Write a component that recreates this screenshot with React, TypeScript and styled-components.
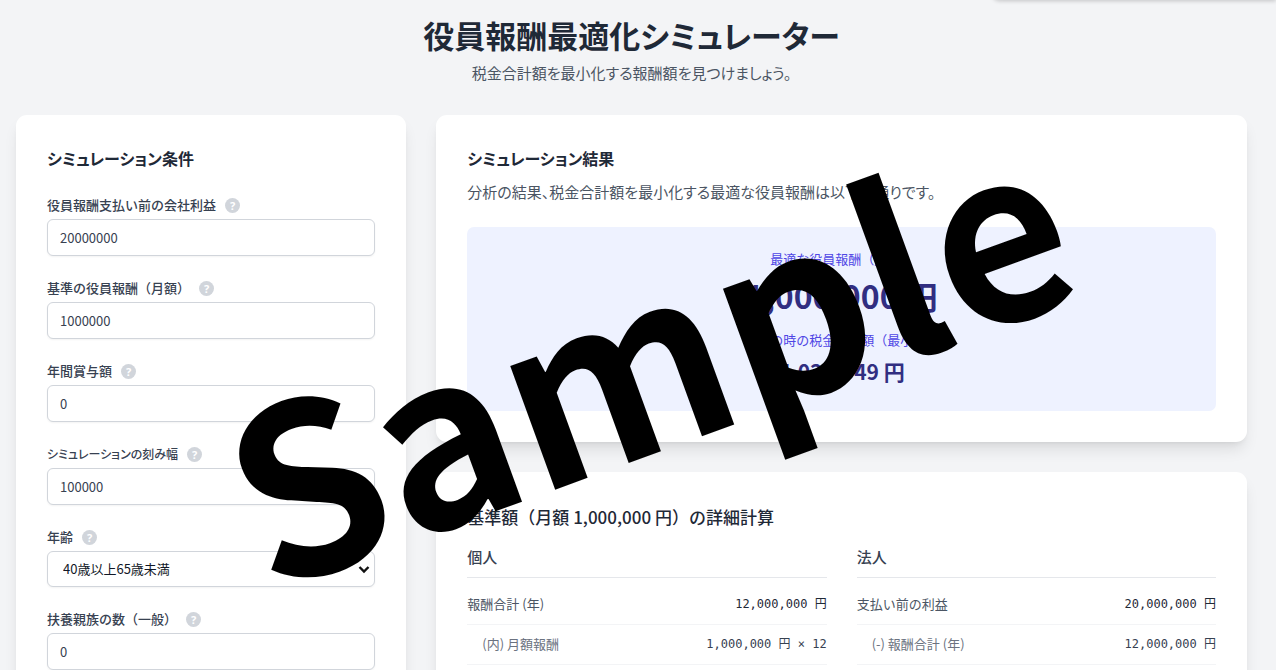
import React, { useId } from 'react';
import styled, { createGlobalStyle } from 'styled-components';

const GlobalStyle = createGlobalStyle`
  *, *::before, *::after { box-sizing: border-box; }
  body {
    margin: 0;
    background: #ffffff;
    color: #1f2937;
    font-family: "Noto Sans CJK JP", "Noto Sans", sans-serif;
  }
  h1, h2, h3, p, dl, dd, dt { margin: 0; }
`;

const Page = styled.div`
  position: relative;
  height: 100vh;
  margin-right: 4px;
  padding: 14px 29px 0 16px;
  overflow: hidden;
  background: #f3f4f6;
`;

const Notice = styled.div`
  position: absolute;
  right: 0;
  bottom: 100%;
  width: 284px;
  height: 60px;
  border-radius: 0 0 0 8px;
  background: #ffffff;
  box-shadow: 0 1px 4px rgba(0, 0, 0, 0.2);
`;

const Header = styled.header`
  margin-bottom: 31px;
  font-feature-settings: "palt";
  text-align: center;
`;

const Title = styled.h1`
  color: #1f2937;
  font-size: 31px;
  font-weight: 700;
  line-height: 42px;
`;

const Lead = styled.p`
  margin-top: 5px;
  color: #4b5563;
  font-size: 15px;
  line-height: 23px;
`;

const Layout = styled.main`
  display: grid;
  grid-template-columns: repeat(3, minmax(0, 1fr));
  align-items: start;
  gap: 30px;
`;

const Results = styled.div`
  display: grid;
  grid-column: span 2;
  gap: 30px;
`;

const Card = styled.section`
  padding: 31px;
  border-radius: 11px;
  background: #ffffff;
  box-shadow: 0 10px 15px -3px rgba(0, 0, 0, 0.1), 0 4px 6px -4px rgba(0, 0, 0, 0.1);
`;

const CardTitle = styled.h2`
  color: #1f2937;
  font-size: 16px;
  font-feature-settings: "palt";
  font-weight: 700;
  line-height: 24px;
`;

const Form = styled.form`
  display: grid;
  gap: 22px;
  margin-top: 25px;
`;

const FieldHead = styled.div`
  display: flex;
  align-items: center;
  gap: 9px;
  height: 20px;
  margin-bottom: 4px;
`;

const Label = styled.label<{ $compact?: boolean }>`
  color: #374151;
  font-size: ${({ $compact }) => ($compact ? 12 : 13)}px;
  font-feature-settings: ${({ $compact }) => ($compact ? '"palt"' : 'normal')};
  font-weight: 500;
  line-height: 20px;
`;

const Help = styled.button`
  width: 15px;
  height: 15px;
  padding: 0;
  border: 0;
  border-radius: 50%;
  background: #d1d5db;
  color: #ffffff;
  font: 700 11px/15px "Noto Sans", sans-serif;
  text-align: center;
`;

const TextInput = styled.input`
  display: block;
  width: 100%;
  height: 37px;
  padding: 0 12px;
  border: 1px solid #d1d5db;
  border-radius: 6px;
  background: #ffffff;
  box-shadow: 0 1px 2px rgba(0, 0, 0, 0.05);
  color: #374151;
  font: 400 13px/20px "Noto Sans CJK JP", sans-serif;
`;

const SelectWrap = styled.div`
  position: relative;
`;

const SelectInput = styled.select`
  display: block;
  width: 100%;
  height: 36px;
  padding: 0 15px;
  border: 1px solid #d1d5db;
  border-radius: 6px;
  appearance: none;
  background: #ffffff;
  box-shadow: 0 1px 2px rgba(0, 0, 0, 0.05);
  color: #111827;
  font: 400 13px/20px "Noto Sans CJK JP", sans-serif;
`;

const Chevron = styled.svg`
  position: absolute;
  top: 14px;
  right: 5px;
  width: 12px;
  height: 9px;
  pointer-events: none;
`;

const Description = styled.p`
  margin-top: 10px;
  color: #4b5563;
  font-size: 15px;
  font-feature-settings: "palt";
  line-height: 23px;
`;

const Highlight = styled.div`
  margin-top: 24px;
  padding: 22px;
  border-radius: 7px;
  background: #eef2ff;
  text-align: center;
`;

const HighlightLabel = styled.p`
  color: #4f46e5;
  font-size: 13px;
  line-height: 20px;
`;

const HighlightValue = styled.p<{ $large?: boolean }>`
  margin: ${({ $large }) => ($large ? '6px 0 15px' : '4px 0 1px')};
  color: #312e81;
  font-size: ${({ $large }) => ($large ? 32 : 21)}px;
  font-weight: 700;
  line-height: ${({ $large }) => ($large ? 40 : 34)}px;
`;

const DetailTitle = styled.h2`
  color: #1f2937;
  font-size: 17px;
  font-weight: 500;
  line-height: 28px;
`;

const Columns = styled.div`
  display: grid;
  grid-template-columns: repeat(2, minmax(0, 1fr));
  gap: 30px;
  margin-top: 15px;
`;

const ColumnTitle = styled.h3`
  padding-bottom: 9px;
  border-bottom: 1px solid #e5e7eb;
  color: #374151;
  font-size: 15px;
  font-weight: 500;
  line-height: 22px;
`;

const Rows = styled.dl`
  padding-top: 7px;
`;

const Row = styled.div<{ $nested?: boolean }>`
  display: flex;
  align-items: center;
  justify-content: space-between;
  height: 40px;
  padding: 0 0 2px ${({ $nested }) => ($nested ? 15 : 0)}px;
  border-bottom: 1px solid #f3f4f6;
  color: ${({ $nested }) => ($nested ? '#6b7280' : '#4b5563')};
  font-size: 13px;
  line-height: 20px;
`;

const Amount = styled.dd<{ $nested?: boolean }>`
  color: ${({ $nested }) => ($nested ? '#374151' : '#1f2937')};
  font-family: "DejaVu Sans Mono", "Noto Sans CJK JP", monospace;
  font-size: 12px;
`;

const Watermark = styled.div`
  position: absolute;
  top: 348px;
  left: 645px;
  transform: translate(-50%, -50%) rotate(-20deg);
  color: #000000;
  font-size: 235px;
  font-weight: 700;
  line-height: 1;
  pointer-events: none;
`;

function FieldTitle({ id, text, compact }: { id: string; text: string; compact?: boolean }) {
  return (
    <FieldHead>
      <Label htmlFor={id} $compact={compact}>{text}</Label>
      <Help type="button" aria-label={`${text}の説明`}>?</Help>
    </FieldHead>
  );
}

function NumberField({ label, value, compact }: { label: string; value: string; compact?: boolean }) {
  const id = useId();
  return (
    <div>
      <FieldTitle id={id} text={label} compact={compact} />
      <TextInput id={id} inputMode="numeric" defaultValue={value} />
    </div>
  );
}

function AgeField() {
  const id = useId();
  return (
    <div>
      <FieldTitle id={id} text="年齢" />
      <SelectWrap>
        <SelectInput id={id}>
          <option>40歳以上65歳未満</option>
        </SelectInput>
        <Chevron viewBox="0 0 12 9" aria-hidden="true">
          <path d="M1.5 2L6 6.5L10.5 2" fill="none" stroke="#111111" strokeWidth="2.4" />
        </Chevron>
      </SelectWrap>
    </div>
  );
}

type Item = { label: string; amount: string; nested?: boolean };

function Breakdown({ title, items }: { title: string; items: Item[] }) {
  return (
    <div>
      <ColumnTitle>{title}</ColumnTitle>
      <Rows>
        {items.map((item) => (
          <Row key={item.label} $nested={item.nested}>
            <dt>{item.label}</dt>
            <Amount $nested={item.nested}>{item.amount}</Amount>
          </Row>
        ))}
      </Rows>
    </div>
  );
}

const personal: Item[] = [
  { label: '報酬合計 (年)', amount: '12,000,000 円' },
  { label: '(内) 月額報酬', amount: '1,000,000 円 × 12', nested: true },
];

const corporate: Item[] = [
  { label: '支払い前の利益', amount: '20,000,000 円' },
  { label: '(-) 報酬合計 (年)', amount: '12,000,000 円', nested: true },
];

export default function App() {
  return (
    <Page>
      <GlobalStyle />
      <Notice />
      <Header>
        <Title>役員報酬最適化シミュレーター</Title>
        <Lead>税金合計額を最小化する報酬額を見つけましょう。</Lead>
      </Header>
      <Layout>
        <Card>
          <CardTitle>シミュレーション条件</CardTitle>
          <Form>
            <NumberField label="役員報酬支払い前の会社利益" value="20000000" />
            <NumberField label="基準の役員報酬（月額）" value="1000000" />
            <NumberField label="年間賞与額" value="0" />
            <NumberField label="シミュレーションの刻み幅" value="100000" compact />
            <AgeField />
            <NumberField label="扶養親族の数（一般）" value="0" />
          </Form>
        </Card>
        <Results>
          <Card>
            <CardTitle>シミュレーション結果</CardTitle>
            <Description>分析の結果、税金合計額を最小化する最適な役員報酬は以下の通りです。</Description>
            <Highlight>
              <HighlightLabel>最適な役員報酬（月額）</HighlightLabel>
              <HighlightValue $large>1,000,000 円</HighlightValue>
              <HighlightLabel>その時の税金合計額（最小）</HighlightLabel>
              <HighlightValue>4,027,949 円</HighlightValue>
            </Highlight>
          </Card>
          <Card>
            <DetailTitle>基準額（月額 1,000,000 円）の詳細計算</DetailTitle>
            <Columns>
              <Breakdown title="個人" items={personal} />
              <Breakdown title="法人" items={corporate} />
            </Columns>
          </Card>
        </Results>
      </Layout>
      <Watermark aria-hidden="true">Sample</Watermark>
    </Page>
  );
}
